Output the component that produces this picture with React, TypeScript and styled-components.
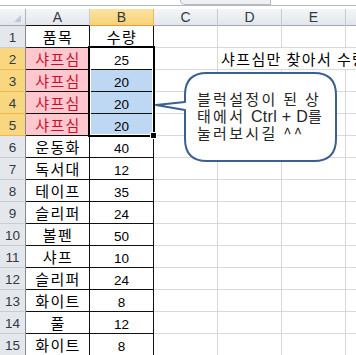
import styled, { createGlobalStyle } from 'styled-components'

const GlobalStyle = createGlobalStyle`
  html, body {
    margin: 0;
    padding: 0;
    background: #fff;
  }
  body {
    width: 356px;
    height: 355px;
    overflow: hidden;
    font-family: "Liberation Sans", Arial, sans-serif;
  }
`

const COLS = ['A', 'B', 'C', 'D', 'E']

// 품목 / 수량 list, row 1 is the table header
const rows = [
  { name: '품목', qty: '수량' },
  { name: '샤프심', qty: '25' },
  { name: '샤프심', qty: '20' },
  { name: '샤프심', qty: '20' },
  { name: '샤프심', qty: '20' },
  { name: '운동화', qty: '40' },
  { name: '독서대', qty: '12' },
  { name: '테이프', qty: '35' },
  { name: '슬리퍼', qty: '24' },
  { name: '볼펜', qty: '50' },
  { name: '샤프', qty: '10' },
  { name: '슬리퍼', qty: '24' },
  { name: '화이트', qty: '8' },
  { name: '풀', qty: '12' },
  { name: '화이트', qty: '8' },
]

const Sheet = styled.div`
  position: relative;
  width: 356px;
  height: 355px;
  overflow: hidden;
  background: #fff;
`

const FormulaEdge = styled.div`
  height: 5px;
  border-bottom: 1px solid #b4bac3;
  margin-bottom: 3px;
  display: flex;
`

const ExpandTab = styled.div`
  margin-left: 180px;
  width: 89px;
  height: 4px;
  background: #eef0f3;
  border: 1px solid #b4bac3;
  border-top: none;
  border-bottom-left-radius: 6px;
`

const Grid = styled.div`
  display: grid;
  grid-template-columns: 26px repeat(5, 64px) 64px;
  grid-template-rows: 17px repeat(15, 22px);
`

const Corner = styled.div`
  box-sizing: border-box;
  background: linear-gradient(#f4f6f9, #e2e6eb);
  border-right: 1px solid #aab3c0;
  border-bottom: 1px solid #9eabbd;
  display: flex;
  align-items: flex-end;
  justify-content: flex-end;
  padding: 0 4px 3px 0;

  &::after {
    content: '';
    width: 0;
    height: 0;
    border-left: 7px solid transparent;
    border-bottom: 7px solid #c3c9d1;
  }
`

const ColHeader = styled.div<{ $active?: boolean; $boxed?: boolean }>`
  box-sizing: border-box;
  display: flex;
  align-items: center;
  justify-content: center;
  font-size: 14px;
  color: #333941;
  background: ${({ $active }) =>
    $active ? 'linear-gradient(#fbe3a0, #f8d27a)' : 'linear-gradient(#f4f6f9, #e2e6eb)'};
  border-right: 1px solid ${({ $active }) => ($active ? '#f0b84e' : '#c5cbd3')};
  border-bottom: 1px solid
    ${({ $active, $boxed }) => ($active ? '#f29a2e' : $boxed ? '#111' : '#9eabbd')};
`

const RowHeader = styled.div<{ $active?: boolean }>`
  box-sizing: border-box;
  display: flex;
  align-items: flex-end;
  justify-content: center;
  padding-bottom: 2px;
  font-size: 13.5px;
  color: #333941;
  background: ${({ $active }) => ($active ? '#f9d680' : '#e4e8ed')};
  border-right: 1px solid #858b94;
  border-bottom: 1px solid ${({ $active }) => ($active ? '#f0b84e' : '#c6ccd4')};
`

const Cell = styled.div<{
  $boxed?: boolean
  $fill?: string
  $ink?: string
  $num?: boolean
  $span?: number
  $open?: boolean
  $left?: boolean
}>`
  box-sizing: border-box;
  grid-column: span ${({ $span }) => $span ?? 1};
  display: flex;
  align-items: center;
  justify-content: ${({ $left }) => ($left ? 'flex-start' : 'center')};
  padding: ${({ $num, $left }) => ($num ? '3px 0 0 0' : $left ? '0 0 1px 3px' : '0 0 1px 1px')};
  white-space: nowrap;
  overflow: visible;
  background: ${({ $fill }) => $fill ?? '#fff'};
  color: ${({ $ink }) => $ink ?? '#000'};
  font-family: ${({ $num }) =>
    $num ? '"Liberation Sans", Arial, sans-serif' : '"Noto Sans CJK KR", "Noto Sans", sans-serif'};
  font-size: ${({ $num }) => ($num ? '13.5px' : '15px')};
  letter-spacing: ${({ $num }) => ($num ? '0' : '1.4px')};
  border-right: 1px solid ${({ $boxed, $open }) => ($open ? 'transparent' : $boxed ? '#111' : '#d9d9d9')};
  border-bottom: 1px solid ${({ $boxed }) => ($boxed ? '#111' : '#d9d9d9')};
`

// Thick outline around the selected range B2:B5
const Selection = styled.div`
  position: absolute;
  left: 88px;
  top: 46px;
  width: 67px;
  height: 91px;
  box-sizing: border-box;
  border: 2px solid #000;
  box-shadow: inset 0 0 0 1px #fff;
  pointer-events: none;
`

const FillHandle = styled.div`
  position: absolute;
  right: -4px;
  bottom: -4px;
  width: 5px;
  height: 5px;
  background: #000;
  border: 1px solid #fff;
`

const Callout = styled.div`
  position: absolute;
  left: 153px;
  top: 70px;
  width: 186px;
  height: 94px;
`

const CalloutShape = styled.svg`
  position: absolute;
  inset: 0;
`

const CalloutText = styled.div`
  position: absolute;
  left: 44px;
  top: 21px;
  font-family: "Noto Sans CJK KR", "Noto Sans", sans-serif;
  font-size: 15px;
  line-height: 16.5px;
  letter-spacing: 2.3px;
  color: #262626;
  white-space: nowrap;
`

const Latin = styled.span`
  font-family: "Liberation Sans", Arial, sans-serif;
  font-size: 16px;
  letter-spacing: 0.3px;
`

export default function App() {
  return (
    <>
      <GlobalStyle />
      <Sheet>
        <FormulaEdge>
          <ExpandTab />
        </FormulaEdge>
        <Grid>
          <Corner />
          {COLS.map((c) => (
            <ColHeader key={c} $active={c === 'B'} $boxed={c === 'A'}>
              {c}
            </ColHeader>
          ))}
          <ColHeader />
          {rows.map((row, i) => {
            const r = i + 1
            const picked = r >= 2 && r <= 5
            return [
              <RowHeader key={`h${r}`} $active={picked}>
                {r}
              </RowHeader>,
              <Cell
                key={`a${r}`}
                $boxed
                $fill={picked ? '#ffc7ce' : undefined}
                $ink={picked ? '#c8102e' : undefined}
              >
                {row.name}
              </Cell>,
              <Cell
                key={`b${r}`}
                $boxed
                $num={r > 1}
                $fill={r >= 3 && r <= 5 ? '#bed7f3' : undefined}
              >
                {row.qty}
              </Cell>,
              <Cell key={`c${r}`} />,
              ...(r === 2
                ? [
                    <Cell key="d2" $span={3} $open $left>
                      샤프심만 찾아서 수량
                    </Cell>,
                  ]
                : [<Cell key={`d${r}`} />, <Cell key={`e${r}`} />, <Cell key={`f${r}`} />]),
            ]
          })}
        </Grid>
        <Selection>
          <FillHandle />
        </Selection>
        <Callout>
          <CalloutShape width="186" height="94" viewBox="0 0 186 94">
            <path
              d="M54 3 H161 Q183 3 183 25 V69 Q183 91 161 91 H54 Q32 91 32 69 V40 L3 35 L32 32 V25 Q32 3 54 3 Z"
              fill="#fff"
              stroke="#3b5f8e"
              strokeWidth="2"
              strokeLinejoin="round"
            />
          </CalloutShape>
          <CalloutText>
            블럭설정이 된 상
            <br />
            태에서 <Latin>Ctrl + D</Latin>를
            <br />
            눌러보시길 ^^
          </CalloutText>
        </Callout>
      </Sheet>
    </>
  )
}
